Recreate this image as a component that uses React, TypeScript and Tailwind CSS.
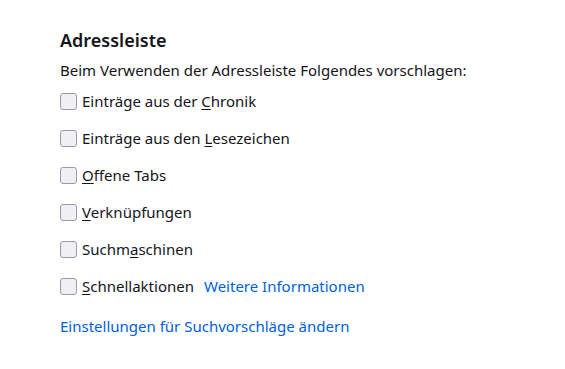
import React, { useState } from 'react';

type Option = { id: string; before: string; key: string; after: string; link?: string };

const options: Option[] = [
  { id: 'history', before: 'Einträge aus der ', key: 'C', after: 'hronik' },
  { id: 'bookmarks', before: 'Einträge aus den ', key: 'L', after: 'esezeichen' },
  { id: 'tabs', before: '', key: 'O', after: 'ffene Tabs' },
  { id: 'shortcuts', before: '', key: 'V', after: 'erknüpfungen' },
  { id: 'engines', before: 'Suchm', key: 'a', after: 'schinen' },
  { id: 'actions', before: '', key: 'S', after: 'chnellaktionen', link: 'Weitere Informationen' },
];

const App: React.FC = () => {
  const [checked, setChecked] = useState<Record<string, boolean>>({});

  return (
    <div
      className="w-[565px] h-[369px] bg-white text-[#15141a] pl-[60px] pt-[28px]"
      style={{ fontFamily: '"Noto Sans", "Open Sans", sans-serif' }}
    >
      <h2 className="text-[18px] leading-[24px] font-semibold">Adressleiste</h2>
      <p className="mt-[7px] text-[15px] leading-[22px]">
        Beim Verwenden der Adressleiste Folgendes vorschlagen:
      </p>

      <div className="mt-[9px] flex flex-col gap-[15px]">
        {options.map((o) => (
          <label key={o.id} className="flex items-center h-[22px] text-[15px] cursor-default">
            <input
              type="checkbox"
              checked={!!checked[o.id]}
              onChange={() => setChecked((p) => ({ ...p, [o.id]: !p[o.id] }))}
              className="appearance-none w-[17px] h-[17px] rounded-[3px] border border-[#9a9aa6] bg-[#f0f0f4] m-0 mr-[5px] checked:bg-[#0061e0]"
            />
            <span>
              {o.before}
              <span className="underline underline-offset-2">{o.key}</span>
              {o.after}
            </span>
            {o.link && (
              <a href="#" className="ml-[10px] text-[#0061e0]">
                {o.link}
              </a>
            )}
          </label>
        ))}
      </div>

      <a href="#" className="block mt-[18px] text-[15px] leading-[22px] text-[#0061e0]">
        Einstellungen für Suchvorschläge ändern
      </a>
    </div>
  );
};

export default App;
